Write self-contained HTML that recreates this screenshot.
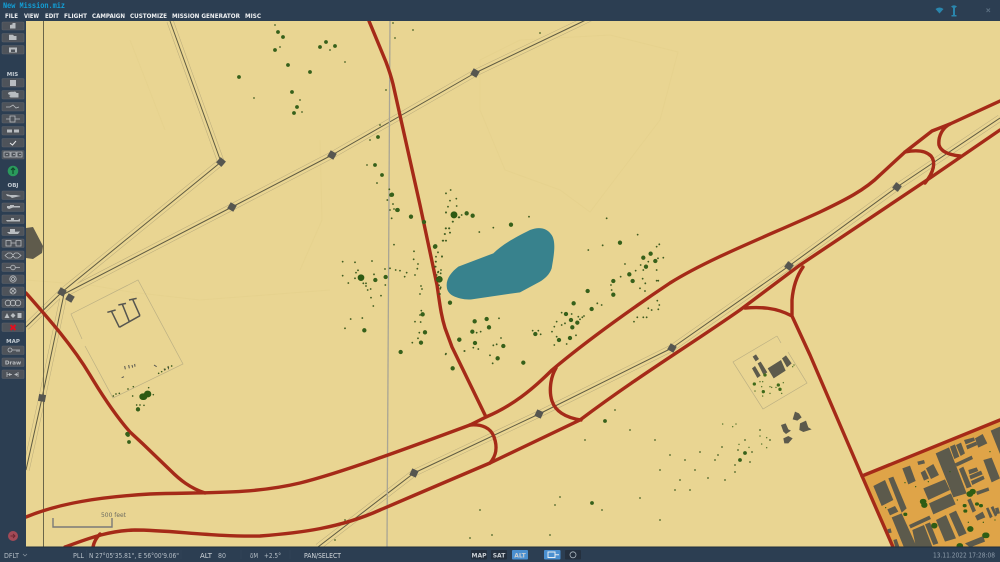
<!DOCTYPE html>
<html><head><meta charset="utf-8"><style>
html,body{margin:0;padding:0;background:#e9d592;overflow:hidden}
svg{display:block}
text{font-family:"DejaVu Sans","Liberation Sans",sans-serif}
.r{fill:none;stroke:#a52a18;stroke-width:3.4;stroke-linecap:round;stroke-linejoin:round}
.bd{fill:#5c5a4c}
.n{fill:#565650}
.t{fill:none;stroke-linecap:round}
.btn{fill:#4e535a;stroke:#5d636b;stroke-width:.6}
.ic{fill:none;stroke:#b8bcc0;stroke-width:.8}
.if{fill:#b8bcc0}
.mt{font-size:6.5px;font-weight:bold;fill:#eef0f2}
.st{font-size:7px;fill:#b5bec6}
.lb{font-size:5.5px;font-weight:bold;fill:#c3cbd3;text-anchor:middle}
</style></head><body>
<svg width="1000" height="562" viewBox="0 0 1000 562" xmlns="http://www.w3.org/2000/svg">
<rect width="1000" height="562" fill="#e9d592"/>
<!-- faint terrain -->
<g fill="none" stroke="#e6d28e" stroke-width="1">
<path d="M480 60L520 40 610 35 678 52 660 120 590 212 560 190 505 170 480 110Z"/>
<path d="M26 280L90 285 130 292 200 300 330 290"/>
<path d="M320 140L322 220 300 270"/>
<path d="M130 40L165 130"/>
</g>
<!-- power lines -->
<g fill="none" stroke="#b9ab7c" stroke-width="7" stroke-linejoin="round">
<path d="M170 21L221 162 62 292 26 327"/><path d="M590 18L475 73 332 155 232 207 64 294 42 398 26 470"/><path d="M1000 118L897 187 789 266 672 348 539 414 414 473 318 547"/>
</g>
<g fill="none" stroke="#e9d592" stroke-width="6" stroke-linejoin="round">
<path d="M170 21L221 162 62 292 26 327"/><path d="M590 18L475 73 332 155 232 207 64 294 42 398 26 470"/><path d="M1000 118L897 187 789 266 672 348 539 414 414 473 318 547"/>
</g>
<g fill="none" stroke="#5f5b42" stroke-width="1" stroke-linejoin="round">
<path d="M170 21L221 162 62 292 26 327"/><path d="M590 18L475 73 332 155 232 207 64 294 42 398 26 470"/><path d="M1000 118L897 187 789 266 672 348 539 414 414 473 318 547"/>
</g>
<!-- vertical lines -->
<path d="M390 21L387 547" stroke="#a9a594" stroke-width="1.3" fill="none"/>
<path d="M43.5 21V547" stroke="#6a6548" stroke-width="1" fill="none"/>
<!-- nodes -->
<g class="n">
<rect x="-3.5" y="-3.5" width="7" height="7" transform="translate(221 162) rotate(40)"/>
<rect x="-3.5" y="-3.5" width="7" height="7" transform="translate(475 73) rotate(30)"/>
<rect x="-3.5" y="-3.5" width="7" height="7" transform="translate(332 155) rotate(30)"/>
<rect x="-3.5" y="-3.5" width="7" height="7" transform="translate(232 207) rotate(30)"/>
<rect x="-3.5" y="-3.5" width="7" height="7" transform="translate(62 292) rotate(30)"/>
<rect x="-3.5" y="-3.5" width="7" height="7" transform="translate(70 298) rotate(30)"/>
<rect x="-3.5" y="-3.5" width="7" height="7" transform="translate(42 398) rotate(10)"/>
<rect x="-3.5" y="-3.5" width="7" height="7" transform="translate(897 187) rotate(35)"/>
<rect x="-3.5" y="-3.5" width="7" height="7" transform="translate(789 266) rotate(35)"/>
<rect x="-3.5" y="-3.5" width="7" height="7" transform="translate(672 348) rotate(30)"/>
<rect x="-3.5" y="-3.5" width="7" height="7" transform="translate(539 414) rotate(25)"/>
<rect x="-3.5" y="-3.5" width="7" height="7" transform="translate(414 473) rotate(25)"/>
</g>
<!-- dark shape left -->
<path d="M26 228L33 227 43 246 42 253 33 259 26 258Z" fill="#5f5b4c"/>
<!-- compounds -->
<g fill="none" stroke="#bcb083" stroke-width=".7">
<path d="M82 339L71 314 138 280 183 364 113 398 85 346"/>
<path d="M777 336L733 362 763 409 807 383 788 352M777 336L781 343"/>
</g>
<g transform="translate(30 270) scale(.3333)" fill="none" stroke="#55554f" stroke-width="4.5">
<path d="M232 127L257 120M265 105L288 100M297 90L320 85M245 125L268 172M277 103L298 155M308 88L330 137M268 172L330 137"/>
<path stroke-width="3" d="M284 288L286 298M296 285L298 295M306 285L308 293M314 282L315 290M372 285L380 290M275 323L282 320M402 296L405 302M414 288L416 298"/>
</g>
<!-- orange zone -->
<path d="M862 476L1000 420V547H893Z" fill="#dfa448"/>
<g transform="translate(850 410) scale(.3333)" class="bd">
<path d="M70 228L105 210 130 270 95 288ZM115 205L130 200 170 295 155 308ZM112 298L135 288 145 305 120 316ZM125 322L155 310 200 410 165 420ZM157 175L180 167 197 213 175 223ZM212 188L225 180 237 205 222 212ZM228 175L250 162 267 195 243 207ZM257 130L297 112 350 250 310 262ZM220 235L285 208 300 240 235 270ZM237 280L303 250 317 283 250 313ZM177 345L238 317 243 327 182 355ZM187 360L222 345 247 410 200 420ZM225 343L240 337 265 400 250 405ZM258 330L288 315 318 385 285 395ZM297 312L318 302 350 370 327 380ZM300 110L315 103 328 140 313 147ZM318 105L333 98 345 130 332 138ZM315 160L365 137 369 147 320 170ZM327 177L340 170 365 230 350 235ZM355 180L380 172 385 183 358 193ZM358 197L393 182 398 193 362 208ZM363 213L400 197 404 207 367 225ZM378 245L415 232 418 242 382 255ZM352 270L362 265 378 302 368 308ZM375 318L398 305 406 322 382 332ZM400 150L425 143 450 205 425 217ZM375 85L398 72 412 100 385 113ZM342 90L372 82 375 92 347 103ZM348 107L378 95 382 105 352 118ZM422 62L450 50V132ZM408 295L415 292 428 320 420 325ZM422 292L430 288 442 315 435 320ZM345 400L400 378 405 395 360 412ZM130 390L140 387 148 410 136 412ZM112 358L122 355 125 368 115 370ZM202 155L222 150 225 160 205 165ZM435 295L445 292 450 310 440 312Z"/>
</g>
<g transform="translate(850 410) scale(.3333)" class="t" stroke="#2f5d14">
<path stroke-width="17" d="M218 275h3M222 285h2M252 347h2M358 252h3M367 245h2M405 376h5M360 357h2M328 408h3"/>
<path stroke-width="10" d="M345 303h2M343 287h2M380 282h2M392 287h2M165 313h2"/>
<path stroke-width="4" d="M165 218h0M197 230h0M107 293h0M322 270h0M420 125h0M355 337h0M400 337h0M435 330h0M300 185h0M235 215h0"/>
</g>
<!-- lake -->
<g transform="translate(430 210) scale(.3333)">
<path d="M50 225C50 205 65 185 85 170L190 130C215 105 250 85 300 60 325 50 350 52 365 75 378 95 373 130 365 175 358 195 345 205 330 215L270 247 125 268C105 270 85 265 70 258 55 250 50 240 50 225Z" fill="#38828d"/>
</g>
<!-- roads -->
<g class="r">
<path d="M369 21L386 62C389 70 391 76 393 84L420 205 437 285C440 305 441 315 445 328L452 347 486 417"/>
<path d="M26 517C60 503 100 497 150 494 200 492 250 495 300 483 340 473 400 451 470 425L486 417C512 406 532 390 552 370 590 338 640 303 670 283 710 258 770 235 820 212 845 200 865 190 880 175L905 152 932 131 950 124 1000 101"/>
<path d="M1000 130L930 178 800 265 740 310C690 345 640 375 580 420L490 463 415 495 380 510C340 528 300 533 260 536 215 537 170 530 135 530 105 531 85 540 65 547"/>
<path d="M100 534C96 538 94 542 93 547"/>
<path d="M26 293C48 318 72 345 90 375 102 395 115 415 130 432L143 444 170 470C180 480 190 488 205 493"/>
<path d="M470 425C482 424 491 428 494 437 498 448 496 456 490 463"/>
<path d="M556 368C550 378 549 392 552 401 556 413 568 418 581 420"/>
<path d="M905 152C915 150 925 150 931 156 936 162 934 172 925 183"/>
<path d="M950 124C942 128 938 137 939 145 941 152 950 155 960 156"/>
<path d="M803 267C796 277 793 288 792 300L792 316M745 308C760 307 775 307 792 316L810 355 862 476"/>
<path d="M862 476L1000 420M862 476L893 547"/>
</g>
<!-- compound 2 buildings -->
<g transform="translate(720 330) scale(.3333)" class="bd">
<path d="M143 115L183 90 197 122 161 145ZM186 85L198 76 215 100 201 112ZM98 80L108 73 117 87 107 94ZM113 100L122 95 142 127 130 134ZM96 115L105 108 122 137 112 144Z"/>
<path d="M225 245L237 250 245 262 232 272 218 268ZM183 285L197 280 205 298 213 302 198 312 190 305ZM190 325L205 318 218 325 205 340 193 340ZM240 280L258 272 265 292 275 298 250 306 238 300Z"/>
</g>
<g transform="translate(720 330) scale(.3333)" class="t">
<path stroke="#3f6a1a" stroke-width="10" d="M103 162h0M130 185h0M175 165h0M180 178h0M135 135h0"/>
<path stroke="#5e7a32" stroke-width="4.5" d="M105 183h0M125 170h0M120 155h0M128 155h0M150 170h0M155 172h0M150 190h0M185 190h0M190 158h0M168 172h0M128 198h0M218 110h0M222 105h0M8 282h0M48 282h0M38 290h0M120 318h0M140 323h0M57 343h0M87 352h0M125 342h0M140 353h0"/>
</g>
<!-- trees: lake zone -->
<g transform="translate(430 210) scale(.3333)" class="t">
<path stroke="#2d5a13" stroke-width="20" d="M72 15h0M28 208h0"/>
<path stroke="#36601a" stroke-width="13" d="M110 10h0M128 17h0M15 110h0M243 44h0M134 334h0M170 327h0M127 365h0M177 352h0M88 389h0M135 399h0M203 445h0M280 458h0M68 475h0M316 372h0M220 408h0M387 390h0M420 384h0M442 338h0M423 330h0M408 312h0M427 352h0M485 297h0M473 243h0M431 280h0M550 213h0M608 213h0M550 254h0M598 193h0M648 170h0M640 143h0M662 131h0M676 153h0M570 98h0M60 278h0"/>
<path stroke="#3f5c20" stroke-width="5.5" d="M48 8h0M88 22h0M297 20h0M47 55h0M58 55h0M45 72h0M60 68h0M38 92h0M48 92h0M68 35h0M190 53h0M148 66h0M530 25h0M623 74h0M518 106h0M475 120h0M18 140h0M36 140h0M17 155h0M15 170h0M25 185h0M32 232h0M30 252h0M207 325h0M213 384h0M190 406h0M200 403h0M103 423h0M47 433h0M180 436h0M188 460h0M145 417h0M130 413h0M152 365h0M140 368h0M308 362h0M325 362h0M332 373h0M366 365h0M373 350h0M380 335h0M395 345h0M405 340h0M395 308h0M425 312h0M457 322h0M450 328h0M462 318h0M445 320h0M380 380h0M373 405h0M410 402h0M438 376h0M502 280h0M515 285h0M545 240h0M543 225h0M572 200h0M638 206h0M646 220h0M630 235h0M645 243h0M680 212h0M685 212h0M585 162h0M617 182h0M632 165h0M640 180h0M655 155h0M680 180h0M700 143h0M680 110h0M688 103h0M684 145h0M655 295h0M665 300h0M682 272h0M688 285h0M685 298h0M622 322h0M640 322h0M650 322h0M612 335h0"/>
</g>
<g transform="translate(330 180) scale(.3333)" class="t">
<path stroke="#2d5a13" stroke-width="20" d="M93 293h0M372 104h0"/>
<path stroke="#36601a" stroke-width="13" d="M186 44h0M203 90h0M243 110h0M282 126h0M136 300h0M167 291h0M316 199h0M328 298h0M278 403h0M285 457h0M273 488h0M388 479h0M103 451h0M212 516h0"/>
<path stroke="#3f5c20" stroke-width="5.5" d="M141 9h0M178 28h0M172 60h0M189 72h0M185 115h0M192 194h0M252 214h0M251 238h0M264 252h0M262 266h0M255 285h0M273 318h0M276 327h0M270 342h0M38 245h0M75 247h0M126 243h0M165 267h0M180 265h0M197 270h0M210 272h0M230 278h0M224 290h0M38 287h0M84 271h0M78 278h0M75 295h0M132 283h0M55 309h0M100 310h0M108 310h0M108 318h0M113 330h0M122 327h0M123 353h0M153 347h0M130 378h0M166 315h0M62 417h0M97 414h0M45 445h0M274 392h0M270 405h0M255 425h0M272 426h0M268 458h0M264 475h0M247 488h0M348 521h0M404 513h0M348 40h0M362 30h0M379 56h0M360 62h0M354 80h0M380 78h0M348 97h0M410 100h0M395 105h0M386 112h0M369 125h0M348 145h0M357 145h0M344 162h0M360 158h0M340 182h0M348 182h0M324 217h0M336 229h0M318 245h0M317 260h0M333 270h0M324 277h0M332 280h0M320 285h0M320 300h0M327 316h0M331 326h0M328 342h0"/>
</g>
<!-- left compound trees -->
<g transform="translate(30 270) scale(.3333)" class="t">
<path stroke="#2d5a13" stroke-width="20" d="M338 380h4M352 372h2"/>
<path stroke="#36601a" stroke-width="13" d="M292 492h0M324 418h0"/>
<path stroke="#3f5c20" stroke-width="5" d="M250 378h0M258 372h0M268 370h0M294 357h0M310 350h0M308 378h0M356 353h0M370 374h0M320 405h0M330 405h0M342 406h0M386 310h0M395 305h0M405 298h0M415 292h0M425 288h0"/>
</g>
<!-- other trees -->
<g class="t">
<path stroke="#36601a" stroke-width="3.8" d="M278 32h0M283 37h0M275 50h0M326 42h0M320 47h0M288 65h0M310 72h0M239 77h0M292 92h0M297 107h0M294 113h0M378 137h0M382 175h0M375 165h0M391 195h0M397 210h0M605 421h0M592 503h0M128 435h0M129 442h0M740 460h0M745 453h0M335 46h0"/>
<path stroke="#3f5c20" stroke-width="1.7" d="M275 25h0M280 47h0M254 98h0M330 50h0M393 23h0M413 30h0M540 33h0M395 38h0M386 90h0M370 140h0M380 125h0M367 165h0M394 209h0M390 210h0M345 62h0M300 100h0M302 112h0M615 410h0M640 498h0M602 510h0M550 535h0M680 480h0M695 470h0M715 460h0M722 447h0M735 465h0M750 462h0M718 455h0M685 460h0M675 490h0M655 440h0M660 470h0M690 490h0M700 452h0M725 480h0M735 472h0M745 440h0M760 430h0M770 440h0M585 440h0M630 430h0M660 520h0M555 505h0M492 535h0M470 538h0M560 497h0M335 540h0M345 520h0M480 510h0M670 455h0M708 478h0M738 450h0M752 452h0"/>
</g>
<!-- scale -->
<path d="M53 518V527H112V518" fill="none" stroke="#7a7a78" stroke-width="1.4"/>
<text x="101" y="517" font-size="6.5" fill="#6a6a60" textLength="25" lengthAdjust="spacingAndGlyphs">500 feet</text>
<!-- bars -->
<rect x="0" y="0" width="1000" height="21" fill="#2c3e52"/>
<rect x="0" y="0" width="26" height="562" fill="#2c3e52"/>
<rect x="0" y="547" width="1000" height="15" fill="#2c3e52"/>
<rect x="26" y="546.5" width="974" height="1" fill="#1f2d3c"/>
<text x="3" y="8" font-size="8.4" font-weight="bold" style="font-family:'Liberation Mono',monospace" fill="#12a0d8" textLength="62" lengthAdjust="spacingAndGlyphs">New Mission.miz</text>
<g class="mt">
<text x="5" y="18" textLength="13" lengthAdjust="spacingAndGlyphs">FILE</text>
<text x="24" y="18" textLength="15" lengthAdjust="spacingAndGlyphs">VIEW</text>
<text x="45" y="18" textLength="14" lengthAdjust="spacingAndGlyphs">EDIT</text>
<text x="64" y="18" textLength="23" lengthAdjust="spacingAndGlyphs">FLIGHT</text>
<text x="92" y="18" textLength="33" lengthAdjust="spacingAndGlyphs">CAMPAIGN</text>
<text x="130" y="18" textLength="37" lengthAdjust="spacingAndGlyphs">CUSTOMIZE</text>
<text x="172" y="18" textLength="68" lengthAdjust="spacingAndGlyphs">MISSION GENERATOR</text>
<text x="245" y="18" textLength="16" lengthAdjust="spacingAndGlyphs">MISC</text>
</g>
<!-- top right icons -->
<path d="M935.5 9Q939.5 6 943.5 9L939.5 13.5Z" fill="#2a86ad"/>
<path d="M951 6.5Q954 4 957 6.5L955 8V15H956.5V16.5H951.5V15H953V8Z" fill="#2a86ad"/>
<path d="M986.5 8.5L990 12M990 8.5L986.5 12" stroke="#5a6e80" stroke-width="1" fill="none"/>
<!-- sidebar buttons -->
<g class="btn">
<rect x="2" y="22" width="22" height="8" rx="1"/><rect x="2" y="33.5" width="22" height="8.5" rx="1"/><rect x="2" y="45.5" width="22" height="8.5" rx="1"/>
<rect x="2" y="78.5" width="22" height="8.5" rx="1"/><rect x="2" y="90.5" width="22" height="8.5" rx="1"/><rect x="2" y="102.5" width="22" height="8.5" rx="1"/><rect x="2" y="114.5" width="22" height="8.5" rx="1"/><rect x="2" y="126.5" width="22" height="8.5" rx="1"/><rect x="2" y="138.5" width="22" height="8.5" rx="1"/><rect x="2" y="150.5" width="22" height="8.5" rx="1"/>
<rect x="2" y="191" width="22" height="8.5" rx="1"/><rect x="2" y="203" width="22" height="8.5" rx="1"/><rect x="2" y="215" width="22" height="8.5" rx="1"/><rect x="2" y="227" width="22" height="8.5" rx="1"/><rect x="2" y="239" width="22" height="8.5" rx="1"/><rect x="2" y="251" width="22" height="8.5" rx="1"/><rect x="2" y="263" width="22" height="8.5" rx="1"/><rect x="2" y="275" width="22" height="8.5" rx="1"/><rect x="2" y="287" width="22" height="8.5" rx="1"/><rect x="2" y="299" width="22" height="8.5" rx="1"/><rect x="2" y="311" width="22" height="8.5" rx="1"/><rect x="2" y="323" width="22" height="8.5" rx="1"/>
<rect x="2" y="346" width="22" height="8.5" rx="1"/><rect x="2" y="358" width="22" height="8.5" rx="1"/><rect x="2" y="370" width="22" height="8.5" rx="1"/>
</g>
<text class="lb" x="12.5" y="76">MIS</text>
<text class="lb" x="13" y="187">OBJ</text>
<text class="lb" x="13" y="343">MAP</text>
<text x="13" y="364.5" font-size="5.6" font-weight="bold" fill="#b8bcc0" text-anchor="middle">Draw</text>
<!-- sidebar icons -->
<path class="if" d="M10 28.5V25L12.5 24.5V23H15.5V28.5ZM9 34.8H13L14 36H16.5V40H9ZM9 47.5H17V52.5H9Z"/>
<path d="M11 49.5H15V52H11Z" fill="#4e535a"/>
<path class="if" d="M10 80H16V86H10ZM11 91.8H14C15 91 16 92 16.5 93H18.5V97.5H11C9 97.5 9 95 11 95 7 95 7 92 11 91.8Z"/>
<path class="ic" d="M6 107H10L13 105 16 108 19 107M6 119H10V116H15V122H10V119M15 119H20"/>
<path class="if" d="M7 129.5H12V132.5H7ZM14 129.5H19V132.5H14Z"/>
<path d="M10 143L12.5 145 16 141" stroke="#e4e6e8" stroke-width="1" fill="none"/>
<path class="ic" d="M4 152H10V157H4ZM11 152H16V157H11ZM17 152H22V157H17ZM6 154.5H8M13 154.5H15M19 154.5H21"/>
<circle cx="13" cy="171" r="5.3" fill="#2a9a5c"/>
<path d="M13 174V168M11 170L13 168 15 170" stroke="#0f4a2c" stroke-width="1.2" fill="none"/>
<path class="if" d="M6 194L10 195 16 195 21 196 16 197 12 198 10 196.5 7 196Z"/>
<path class="if" d="M7 206H20V207.5H13L9 209 7 208ZM10 205H14V206H10Z"/>
<path class="if" d="M6 220H18L20 218.5V221.5H7ZM11 218H14V220H11Z"/>
<path class="if" d="M7 232L20 231.5 18 234H9ZM10 229H15V232H10Z"/>
<path class="ic" d="M6 240.5H11V246H6ZM16 240.5H21V246H16ZM11 243H16"/>
<path class="ic" d="M5 255.5L8 253H11L13 255 15 253H18L21 255.5 18 258H15L13 256 11 258H8Z"/>
<path class="ic" d="M6 267.5H10.5M15.5 267.5H20"/><circle class="ic" cx="13" cy="267.5" r="2.3"/>
<circle class="ic" cx="13" cy="279" r="3.2"/><circle class="ic" cx="13" cy="279" r="1.5"/>
<circle class="ic" cx="13" cy="291" r="3"/><path class="ic" d="M11 289L15 293M15 289L11 293"/>
<circle class="ic" cx="8" cy="303" r="2.8"/><circle class="ic" cx="13" cy="303" r="2.8"/><circle class="ic" cx="18" cy="303" r="2.8"/>
<path class="if" d="M4.5 318L7 313 9.5 318ZM13 313L15.5 315.5 13 318 10.5 315.5ZM17.5 313H21.5V318H17.5Z"/>
<path d="M10.5 325L15.5 330M15.5 325L10.5 330" stroke="#e01020" stroke-width="2" fill="none"/>
<circle class="ic" cx="10" cy="350" r="2"/><path class="ic" d="M12 350H20M17 350V352M19 350V352"/>
<path class="ic" d="M7 372V377M18 372V377M7 374.5H12M15 374.5H18"/><path class="if" d="M9 373L12 374.5 9 376ZM14 374.5L17 373V376Z"/>
<circle cx="13" cy="536" r="5" fill="#a34a57"/>
<path d="M10.5 536H15M13 534L15 536 13 538" stroke="#6b2530" stroke-width=".9" fill="none"/>
<!-- status bar -->
<g class="st">
<text x="4" y="558" textLength="15" lengthAdjust="spacingAndGlyphs">DFLT</text>
<text x="73" y="558" textLength="11" lengthAdjust="spacingAndGlyphs">PLL</text>
<text x="89" y="558" textLength="90" lengthAdjust="spacingAndGlyphs">N 27°05'35.81", E 56°00'9.06"</text>
<text x="200" y="558" textLength="12" lengthAdjust="spacingAndGlyphs" fill="#d5dade">ALT</text>
<text x="218" y="558" textLength="8" lengthAdjust="spacingAndGlyphs">80</text>
<text x="250" y="558" textLength="8" lengthAdjust="spacingAndGlyphs">δM</text>
<text x="264" y="558" textLength="17" lengthAdjust="spacingAndGlyphs">+2.5°</text>
<text x="304" y="558" textLength="37" lengthAdjust="spacingAndGlyphs" fill="#d5dade">PAN/SELECT</text>
<text x="933" y="557.5" textLength="62" lengthAdjust="spacingAndGlyphs" fill="#8f9dab">13.11.2022 17:28:08</text>
</g>
<path d="M23 554L25 556 27 554" stroke="#8a96a2" stroke-width=".7" fill="none"/>
<path d="M86.5 550V559M181 550V559M241 550V559M290 550V559" stroke="#35485c" stroke-width=".6"/>
<rect x="471" y="550" width="16" height="9.5" rx="1" fill="#25303e"/>
<rect x="491" y="550" width="16" height="9.5" rx="1" fill="#25303e"/>
<rect x="512" y="550" width="16" height="9.5" rx="1" fill="#4a8fd0"/>
<g font-size="6" font-weight="bold" fill="#c9ced3" text-anchor="middle">
<text x="479" y="557.3">MAP</text><text x="499" y="557.3">SAT</text><text x="520" y="557.3">ALT</text>
</g>
<rect x="544" y="550" width="16.5" height="9.5" rx="1" fill="#4a8fd0"/>
<path d="M548 552H555V557.5H548ZM555 554.8H559" fill="none" stroke="#e6ecf2" stroke-width="1"/>
<rect x="565" y="550" width="16" height="9.5" rx="1" fill="#25303e"/>
<circle cx="573" cy="554.8" r="3" fill="none" stroke="#aab4bd" stroke-width=".8"/>
</svg>
</body></html>
